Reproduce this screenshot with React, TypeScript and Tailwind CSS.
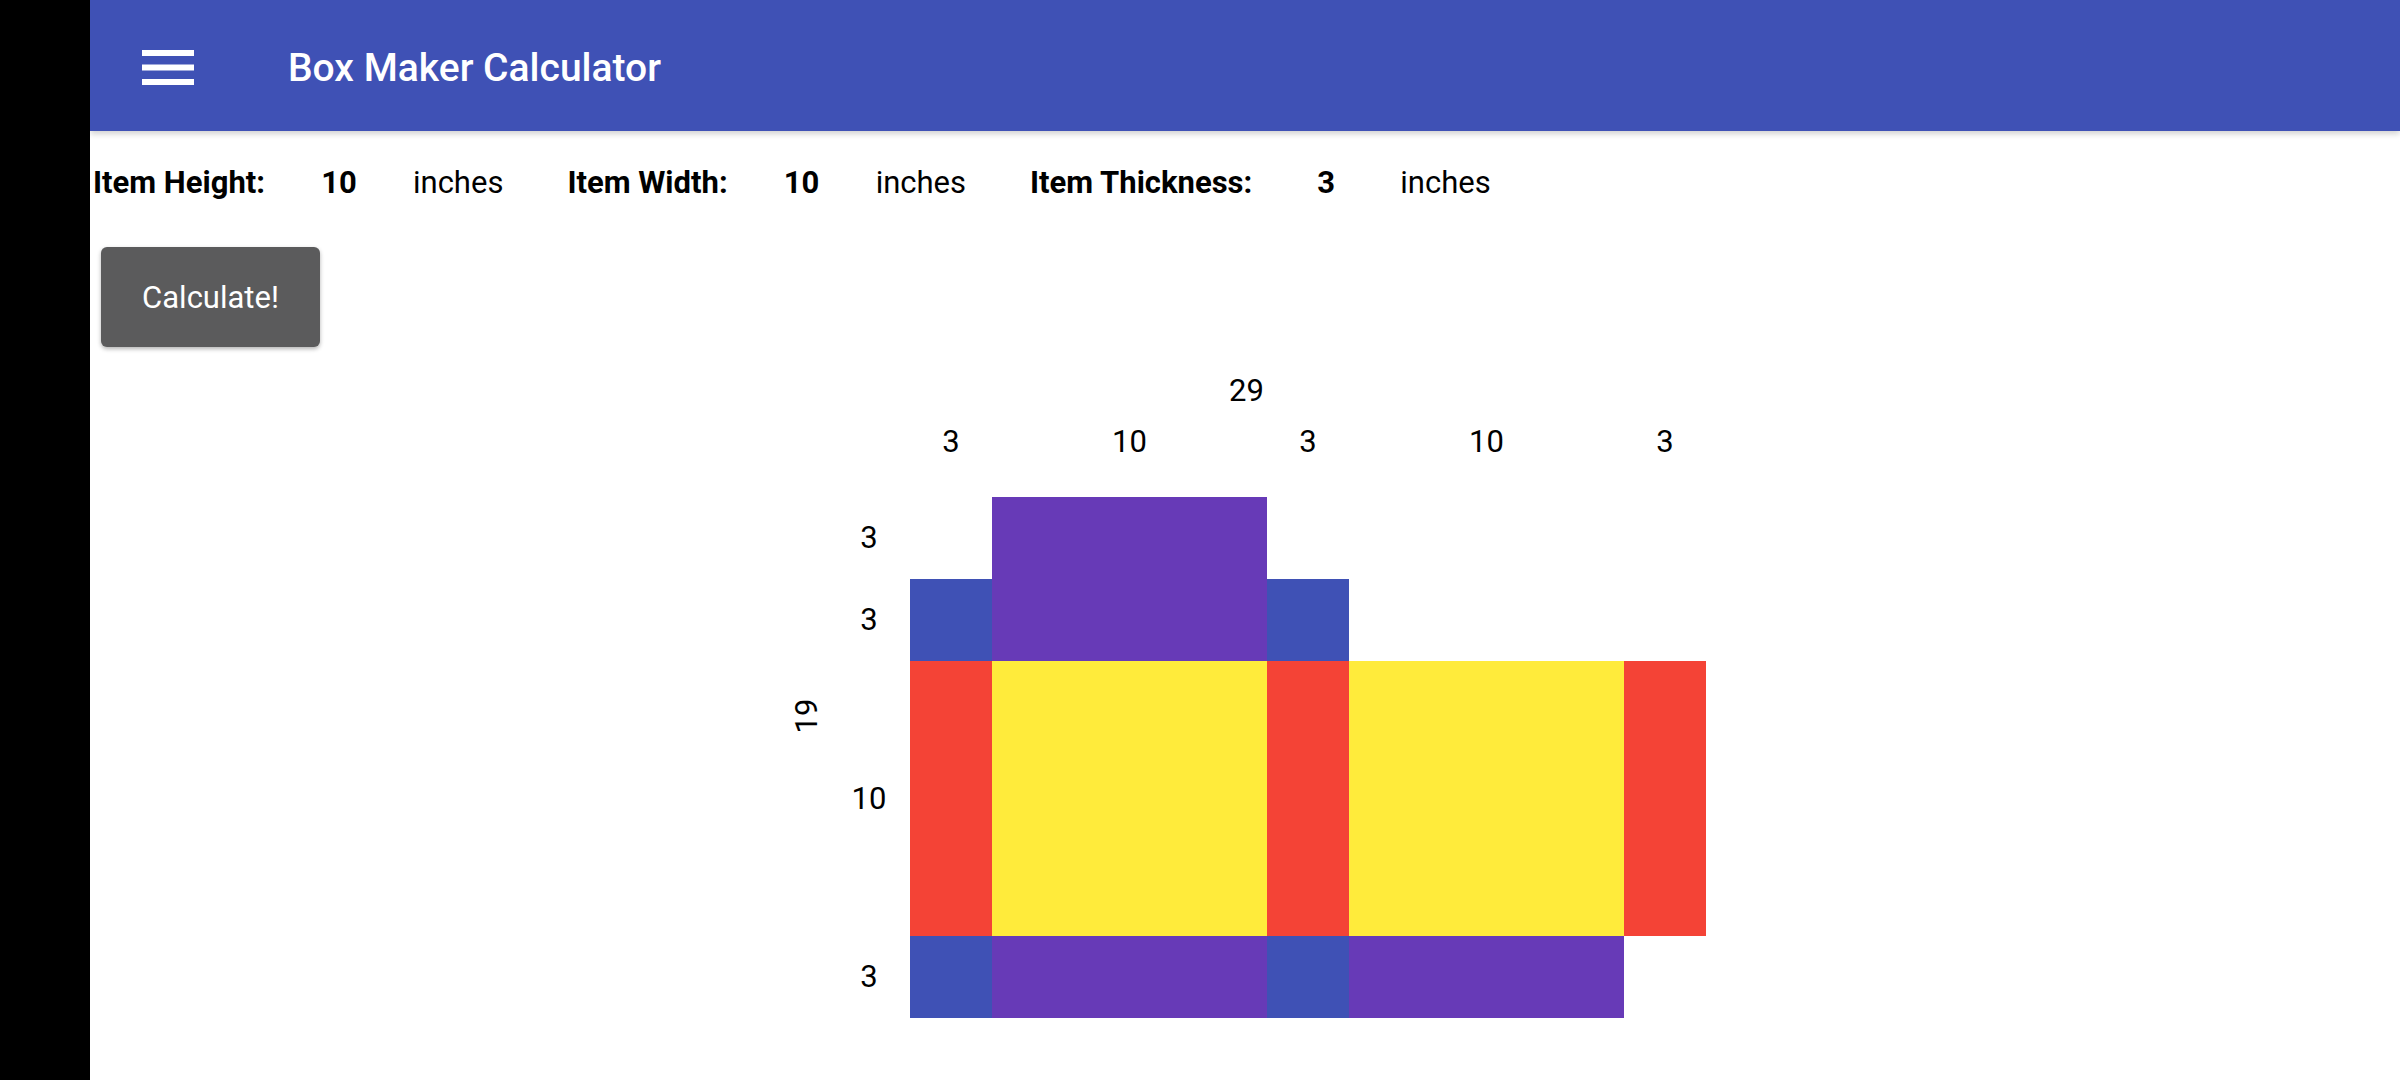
import React from "react";

const font = { fontFamily: "Roboto, 'Noto Sans', sans-serif" };

function Field({ label, value }: { label: string; value: string }) {
  return (
    <div className="flex items-center">
      <span className="font-bold">{label}</span>
      <span className="w-[148px] text-center font-bold">{value}</span>
      <span className="mr-[64px]">inches</span>
    </div>
  );
}

function Cell({ c }: { c?: string }) {
  return <div className={c ?? ""} />;
}

function RowLabel({ t }: { t: string }) {
  return <div className="flex items-center justify-center">{t}</div>;
}

export default function App() {
  const B = "bg-[#3f51b5]";
  const P = "bg-[#673ab7]";
  const R = "bg-[#f44336]";
  const Y = "bg-[#ffeb3b]";
  return (
    <div className="flex h-[1080px] w-[2400px] overflow-hidden bg-white text-black" style={font}>
      <div className="h-full w-[90px] shrink-0 bg-black" />
      <div className="flex flex-1 flex-col">
        <header className="relative z-10 flex h-[131px] shrink-0 items-center bg-[#3f51b5] pl-[52px] pt-[4px] shadow-[0_3px_6px_rgba(0,0,0,0.18)]">
          <svg width="52" height="36" viewBox="0 0 52 36" className="shrink-0">
            <rect x="0" y="0" width="52" height="6" fill="#fff" />
            <rect x="0" y="14.5" width="52" height="6" fill="#fff" />
            <rect x="0" y="29" width="52" height="6" fill="#fff" />
          </svg>
          <h1 className="ml-[94px] text-[39px] font-medium leading-[46px] text-white">Box Maker Calculator</h1>
        </header>

        <div className="mt-[34px] flex h-[36px] items-center pl-[3px] text-[31px] leading-[36px]">
          <Field label="Item Height:" value="10" />
          <Field label="Item Width:" value="10" />
          <Field label="Item Thickness:" value="3" />
        </div>

        <div className="ml-[11px] mt-[46px]">
          <button className="flex h-[100px] w-[219px] items-center justify-center rounded-[6px] bg-[#5b5b5c] pt-[2px] text-[31px] text-white shadow-[0_2px_4px_rgba(0,0,0,0.3)]">
            Calculate!
          </button>
        </div>

        <div className="ml-[696px] mt-[25px] grid grid-cols-[42px_82px_82px_275px_82px_275px_82px] grid-rows-[52px_73px_82px_82px_275px_82px] text-[31px] leading-[36px]">
          <div className="col-span-7 pl-[443px] pt-[1px]">29</div>

          <div />
          <div />
          <div className="text-center">3</div>
          <div className="text-center">10</div>
          <div className="text-center">3</div>
          <div className="text-center">10</div>
          <div className="text-center">3</div>

          <div className="row-span-4 flex items-center justify-center pb-[84px]">
            <span className="inline-block -rotate-90">19</span>
          </div>
          <RowLabel t="3" />
          <Cell />
          <Cell c={`row-span-2 ${P}`} />
          <Cell />
          <Cell />
          <Cell />

          <RowLabel t="3" />
          <Cell c={B} />
          <Cell c={B} />
          <Cell />
          <Cell />

          <RowLabel t="10" />
          <Cell c={R} />
          <Cell c={Y} />
          <Cell c={R} />
          <Cell c={Y} />
          <Cell c={R} />

          <RowLabel t="3" />
          <Cell c={B} />
          <Cell c={P} />
          <Cell c={B} />
          <Cell c={P} />
          <Cell />
        </div>
      </div>
    </div>
  );
}
